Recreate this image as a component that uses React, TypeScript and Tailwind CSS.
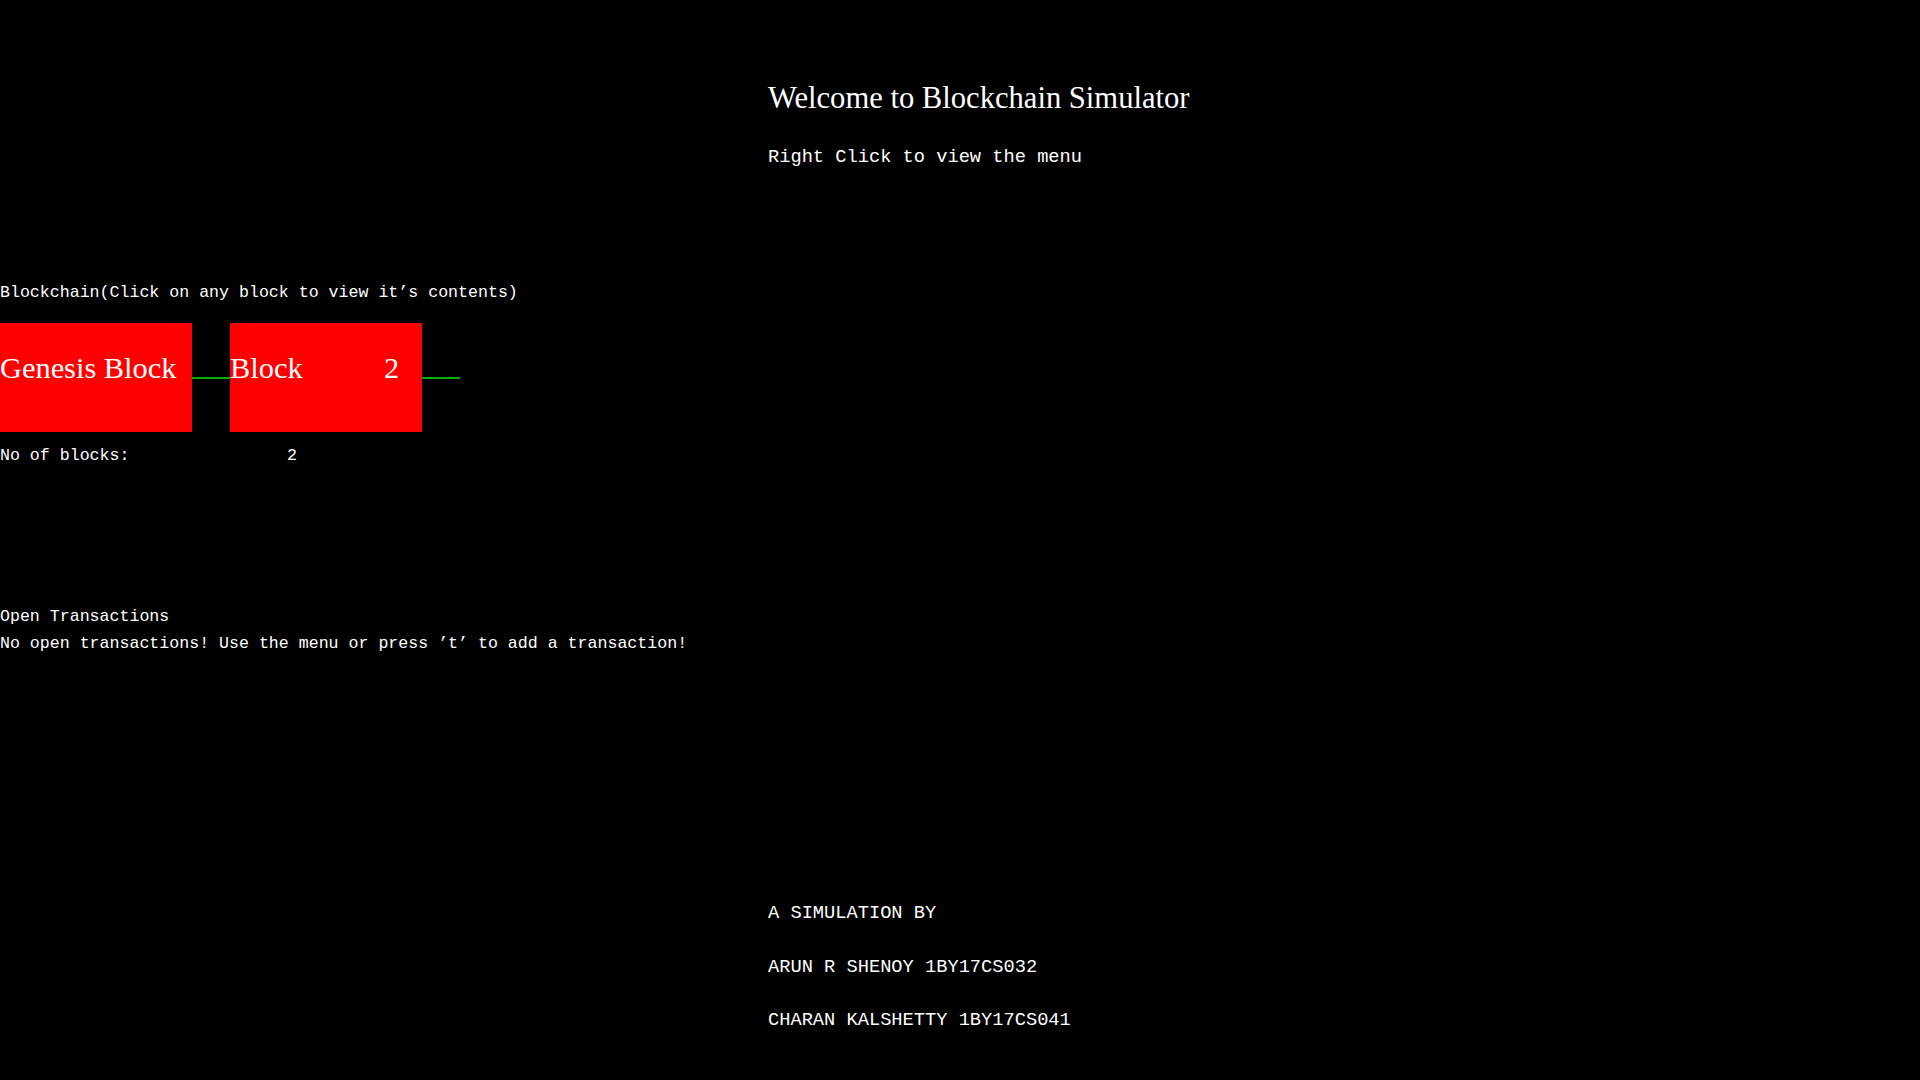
import React from "react";

const mono = "font-['Liberation_Mono',monospace]";
const serif = "font-['Liberation_Serif',serif]";

export default function App() {
  return (
    <div className="w-[1920px] h-[1080px] bg-black text-white overflow-hidden flex flex-col">
      <div className="pl-[768px] pt-[83px]">
        <h1 className={`${serif} text-[30.6px] leading-[30px] font-normal whitespace-nowrap`}>
          Welcome to Blockchain Simulator
        </h1>
        <p className={`${mono} text-[18.7px] leading-[19px] mt-[35px] whitespace-nowrap`}>
          Right Click to view the menu
        </p>
      </div>

      <div className={`${mono} text-[16.6px] leading-[17px] mt-[117px] whitespace-nowrap`}>
        Blockchain(Click on any block to view it’s contents)
      </div>

      <div className="flex items-start mt-[22px]">
        <div className={`${serif} w-[192px] h-[109px] bg-[#ff0000] text-[30.4px] leading-[30px] pt-[30px] whitespace-nowrap`}>
          Genesis Block
        </div>
        <div className="w-[38px] h-[2px] mt-[54px] bg-[#00b000]" />
        <div className={`${serif} w-[192px] h-[109px] bg-[#ff0000] text-[30.4px] leading-[30px] pt-[30px] whitespace-nowrap flex`}>
          <span className="inline-block w-[154px]">Block</span>
          <span>2</span>
        </div>
        <div className="w-[38px] h-[2px] mt-[54px] bg-[#00b000]" />
      </div>

      <div className={`${mono} text-[16.6px] leading-[17px] mt-[15px] whitespace-nowrap flex`}>
        <span className="inline-block w-[287px]">No of blocks:</span>
        <span>2</span>
      </div>

      <div className={`${mono} text-[16.6px] leading-[17px] mt-[144px] whitespace-nowrap`}>
        Open Transactions
      </div>
      <div className={`${mono} text-[16.6px] leading-[17px] mt-[10px] whitespace-nowrap`}>
        No open transactions! Use the menu or press ’t’ to add a transaction!
      </div>

      <div className={`${mono} text-[18.7px] leading-[19px] pl-[768px] mt-[252px] whitespace-nowrap`}>
        <p>A SIMULATION BY</p>
        <p className="mt-[35px]">ARUN R SHENOY 1BY17CS032</p>
        <p className="mt-[34px]">CHARAN KALSHETTY 1BY17CS041</p>
      </div>
    </div>
  );
}
